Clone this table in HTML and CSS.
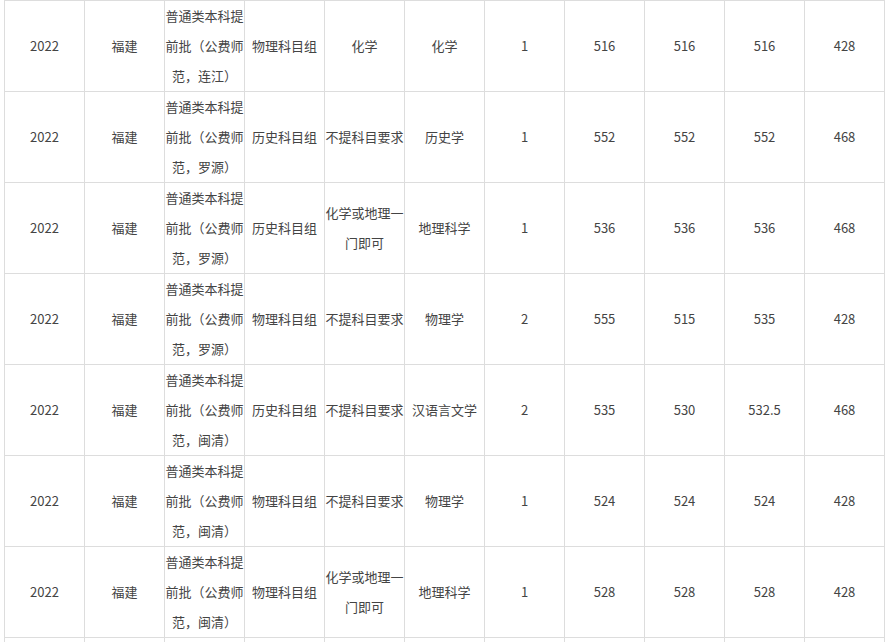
FILE: index.html
```html
<!DOCTYPE html>
<html lang="zh-CN">
<head>
<meta charset="utf-8">
<link rel="stylesheet" href="styles.css">
</head>
<body>
<table class="score-table">
<tbody>
<tr><td>2022</td><td>福建</td><td>普通类本科提前批（公费师范，连江）</td><td>物理科目组</td><td>化学</td><td>化学</td><td>1</td><td>516</td><td>516</td><td>516</td><td>428</td></tr>
<tr><td>2022</td><td>福建</td><td>普通类本科提前批（公费师范，罗源）</td><td>历史科目组</td><td>不提科目要求</td><td>历史学</td><td>1</td><td>552</td><td>552</td><td>552</td><td>468</td></tr>
<tr><td>2022</td><td>福建</td><td>普通类本科提前批（公费师范，罗源）</td><td>历史科目组</td><td>化学或地理一门即可</td><td>地理科学</td><td>1</td><td>536</td><td>536</td><td>536</td><td>468</td></tr>
<tr><td>2022</td><td>福建</td><td>普通类本科提前批（公费师范，罗源）</td><td>物理科目组</td><td>不提科目要求</td><td>物理学</td><td>2</td><td>555</td><td>515</td><td>535</td><td>428</td></tr>
<tr><td>2022</td><td>福建</td><td>普通类本科提前批（公费师范，闽清）</td><td>历史科目组</td><td>不提科目要求</td><td>汉语言文学</td><td>2</td><td>535</td><td>530</td><td>532.5</td><td>468</td></tr>
<tr><td>2022</td><td>福建</td><td>普通类本科提前批（公费师范，闽清）</td><td>物理科目组</td><td>不提科目要求</td><td>物理学</td><td>1</td><td>524</td><td>524</td><td>524</td><td>428</td></tr>
<tr><td>2022</td><td>福建</td><td>普通类本科提前批（公费师范，闽清）</td><td>物理科目组</td><td>化学或地理一门即可</td><td>地理科学</td><td>1</td><td>528</td><td>528</td><td>528</td><td>428</td></tr>
<tr class="partial"><td></td><td></td><td></td><td></td><td></td><td></td><td></td><td></td><td></td><td></td><td></td></tr>
</tbody>
</table>
</body>
</html>
```

FILE: styles.css
```css
html, body {
  margin: 0;
  padding: 0;
  background: #fff;
}
body {
  padding-left: 4px;
  font-family: "Microsoft YaHei", "Noto Sans CJK SC", sans-serif;
  font-size: 13px;
  color: #444;
}
.score-table {
  border-collapse: collapse;
  table-layout: fixed;
  width: 881px;
}
.score-table td {
  border: 1px solid #ddd;
  width: 79px;
  height: 90px;
  padding: 0;
  line-height: 30px;
  text-align: center;
  vertical-align: middle;
  word-break: break-all;
}
```
